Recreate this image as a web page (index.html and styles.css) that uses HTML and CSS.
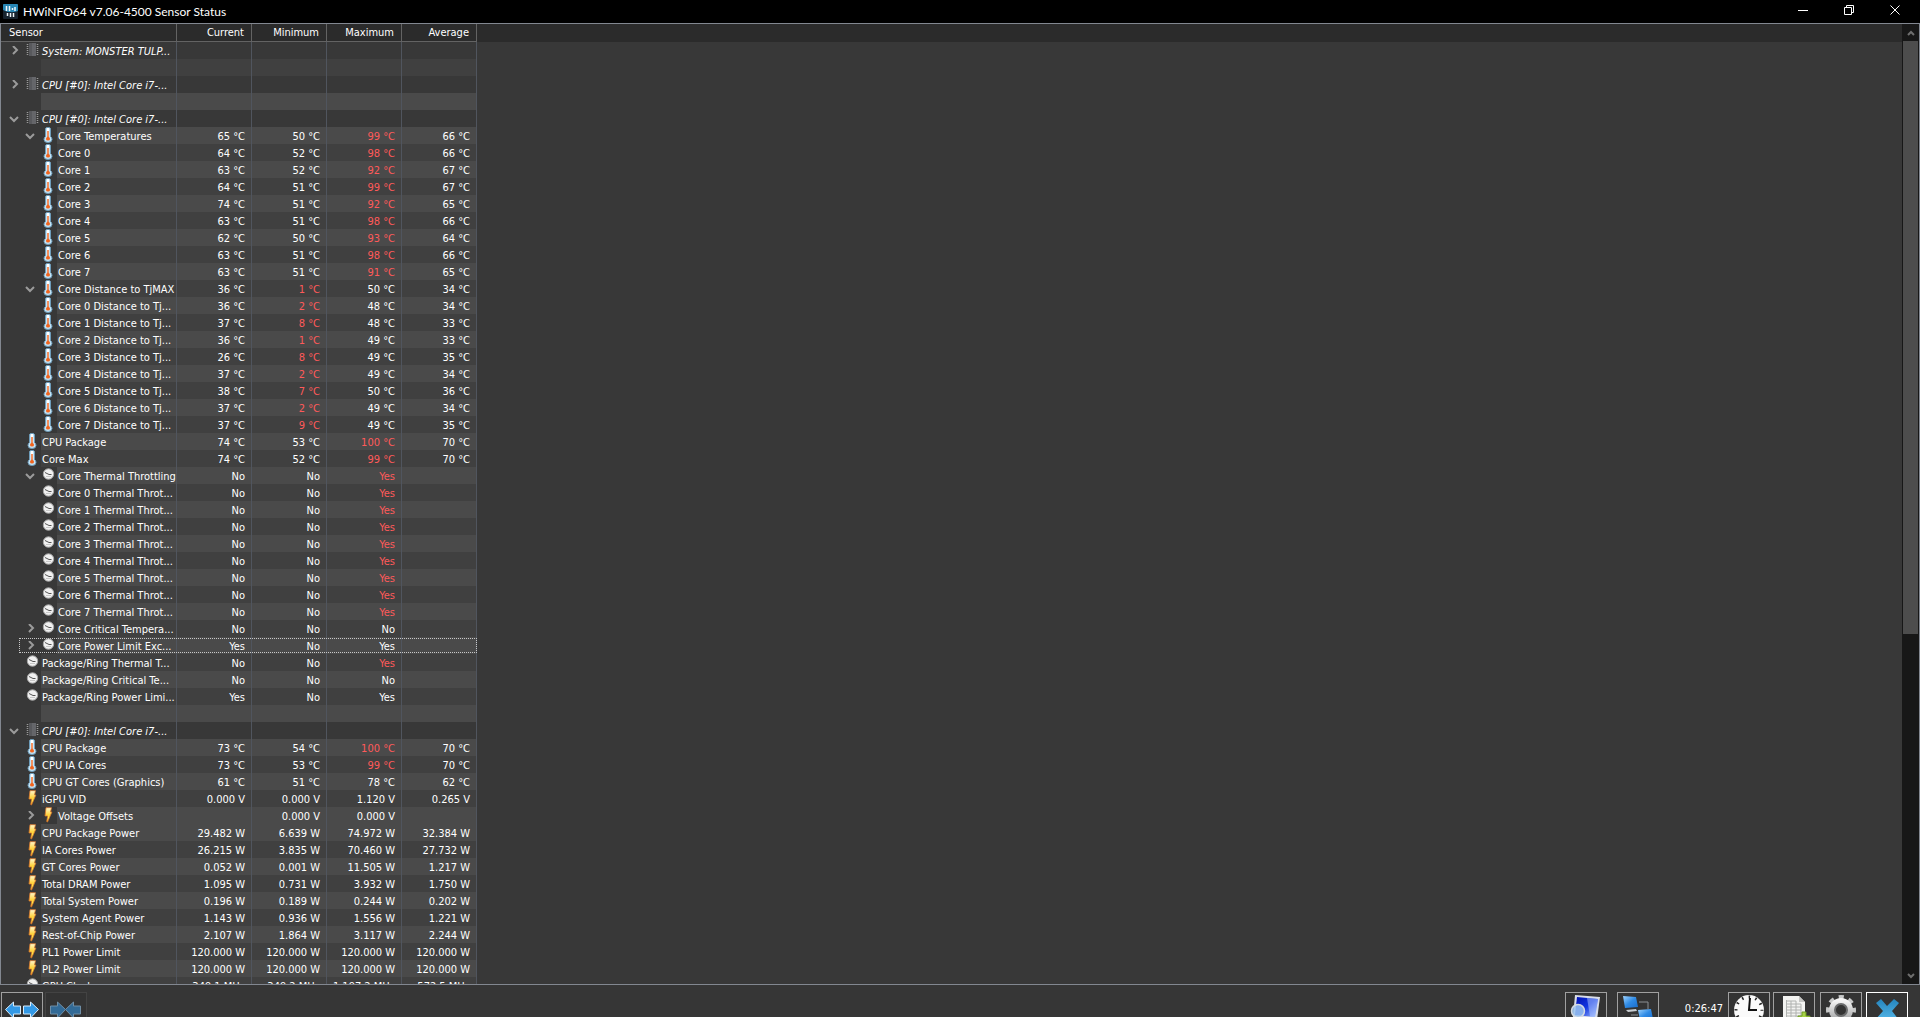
FILE: index.html
```html
<!DOCTYPE html>
<html lang="en">
<head>
<meta charset="utf-8">
<title>HWiNFO64 v7.06-4500 Sensor Status</title>
<link rel="stylesheet" href="styles.css">
</head>
<body>
<svg class="sprites" aria-hidden="true">
  <linearGradient id="silver" x1="0" y1="0" x2="0" y2="1"><stop offset="0" stop-color="#f4f4f4"/><stop offset="1" stop-color="#a9aaab"/></linearGradient>
  <linearGradient id="gold" x1="0" y1="0" x2="0" y2="1"><stop offset="0" stop-color="#fffad0"/><stop offset=".5" stop-color="#ffd23c"/><stop offset=".75" stop-color="#fff04a"/><stop offset="1" stop-color="#f08a20"/></linearGradient>
  <linearGradient id="screen" x1="0" y1="0" x2="1" y2="1"><stop offset="0" stop-color="#0010b0"/><stop offset=".5" stop-color="#1236e0"/><stop offset="1" stop-color="#a8c4ff"/></linearGradient>
  <linearGradient id="sky" x1="0" y1="0" x2="1" y2="1"><stop offset="0" stop-color="#9fd4ff"/><stop offset=".5" stop-color="#2f8be6"/><stop offset="1" stop-color="#1a6dcc"/></linearGradient>
  <linearGradient id="cross" x1="0" y1="0" x2="0" y2="1"><stop offset="0" stop-color="#2484bd"/><stop offset="1" stop-color="#5fc0f0"/></linearGradient>
  <symbol id="chip" viewBox="0 0 16 16"><path d="M5 1h7v13H5z" fill="#58595d"/><path d="M8 1h4v13H8z" fill="#65666a"/><path d="M3.500 2v12M13.500 2v12" stroke="#9a9a9a" stroke-width="1.500" stroke-dasharray="1 1"/></symbol>
  <symbol id="temp" viewBox="0 0 16 16"><path d="M5.500 1.500q0-1 2.500-1t2.500 1v8q1.500 1 1.500 3 0 3-4 3t-4-3q0-2 1.500-3z" fill="#c4e4f6" stroke="#6d9cba"/><path d="M7 1h2v8H7z" fill="#fff"/><path d="M7.300 4h1.400v6q1.300.5 1.300 2T8 13.500 6 12t1.300-2z" fill="#f0641e"/></symbol>
  <symbol id="dial" viewBox="0 0 16 16"><circle cx="8.500" cy="7" r="5.200" fill="#f1f1f1" stroke="#a8a8a8"/><path d="M5 5.500l4 2h2.500" fill="none" stroke="#555"/><path d="M6 9.500h5" stroke="#c8c8c8"/></symbol>
  <symbol id="bolt" viewBox="0 0 16 16"><path d="M6 .7h5.500L10.500 5h1.400L7.500 15l-.8-.5 1-5.500H5z" fill="url(#gold)" stroke="#d9772c" stroke-width=".8"/></symbol>
  <symbol id="closed" viewBox="0 0 10 10"><path d="M4 0l4 4-4 4" fill="none" stroke="#9b9b9b" stroke-width="2"/></symbol>
  <symbol id="open" viewBox="0 0 10 10"><path d="M1 3l4 4 4-4" fill="none" stroke="#9b9b9b" stroke-width="2"/></symbol>
</svg>

<header class="titlebar">
  <svg class="app-icon" viewBox="0 0 15 15"><rect width="15" height="15" rx="1" fill="#17232e"/><path d="M0 1q0-1 1-1h13q1 0 1 1v6q-8 3-15-1z" fill="#2786b4"/><path d="M3.500 2v5M6.500 2v5M9.500 4v2M12 3v4M4.500 9v3M7.500 9v4M10.500 9v4" stroke="#eef6fa" stroke-width="1.500"/></svg>
  <h1>HWiNFO64 v7.06-4500 Sensor Status</h1>
  <div class="window-controls">
    <button type="button" aria-label="Minimize"><svg viewBox="0 0 10 10"><path d="M0 5.500h10" stroke="#fff"/></svg></button>
    <button type="button" aria-label="Restore"><svg viewBox="0 0 10 10"><path d="M.5 2.500h7v7h-7zM2.500 2.500v-2h7v7h-2" fill="none" stroke="#fff"/></svg></button>
    <button type="button" aria-label="Close"><svg viewBox="0 0 10 10"><path d="M.5.500l9 9M9.500.500l-9 9" stroke="#fff"/></svg></button>
  </div>
</header>

<main class="list">
  <div class="view">
    <table class="sensors">
      <colgroup><col class="col-name"><col><col><col><col></colgroup>
      <thead><tr><th scope="col">Sensor</th><th scope="col">Current</th><th scope="col">Minimum</th><th scope="col">Maximum</th><th scope="col">Average</th></tr></thead>
      <tbody id="rows"></tbody>
    </table>
  </div>
  <div class="scrollbar">
    <button type="button" aria-label="Scroll up"><svg viewBox="0 0 8 8"><path d="M1 6l3-3 3 3" fill="none" stroke="#6e6e6e" stroke-width="2"/></svg></button>
    <div class="track"><div class="thumb"></div></div>
    <button type="button" aria-label="Scroll down"><svg viewBox="0 0 8 8"><path d="M1 2l3 3 3-3" fill="none" stroke="#6e6e6e" stroke-width="2"/></svg></button>
  </div>
</main>

<footer class="toolbar">
  <button type="button" class="tool" aria-label="Expand columns"><svg viewBox="0 0 40 40"><g fill="#3399e6" stroke="#d8ecfb"><path d="M3.500 16.500l8-7.500v4h7v8h-7v4z"/><path d="M36.500 16.500l-8-7.500v4h-7v8h7v4z"/></g></svg></button>
  <button type="button" class="tool" disabled aria-label="Shrink columns"><svg viewBox="0 0 40 40"><g fill="#326a96" stroke="#6f8ea6"><path d="M19.500 16.500l-8-7.500v4h-7v8h7v4z"/><path d="M19.500 16.500l8-7.500v4h7v8h-7v4z"/></g></svg></button>
  <div class="spacer"></div>
  <button type="button" class="tool inspect" aria-label="Summary"><svg viewBox="0 0 40 40"><path d="M9 2l25 2-3 23-24-3z" fill="#d9dde8"/><path d="M11 4l21 2-3 18-20-2z" fill="url(#screen)"/><path d="M21 5l11 1-3 18-5-.5z" fill="#b4ccff" fill-opacity=".5"/><circle cx="12" cy="18" r="6.500" fill="#9cc6f0" fill-opacity=".85" stroke="#d5dbe2" stroke-width="1.500"/></svg></button>
  <button type="button" class="tool network" aria-label="Remote"><svg viewBox="0 0 40 40"><path d="M21 9h9v7M13 22h7" fill="none" stroke="#8b8f93"/><path d="M5 3l13 1 2 10-13 1z" fill="url(#sky)"/><path d="M8 17l10-1 1 2-9 1z" fill="#c9ced2"/><path d="M20 17l13-1 2 10-13 1z" fill="url(#sky)"/></svg></button>
  <time class="elapsed">0:26:47</time>
  <button type="button" class="tool clock" aria-label="Reset timer"><svg viewBox="0 0 40 40"><circle cx="20" cy="17" r="15" fill="#fafafa"/><circle cx="20" cy="17" r="13" fill="none" stroke="#222" stroke-width="3" stroke-dasharray="1.500 5.307" stroke-dashoffset=".75"/><path d="M21 5l-1 12h8" fill="none" stroke="#111" stroke-width="2"/></svg></button>
  <button type="button" class="tool log" aria-label="Logging"><svg viewBox="0 0 40 40"><path d="M9 3h16l6 6v26H9z" fill="#f3f3f1"/><path d="M25 3v6h6z" fill="#c6c6c4"/><path d="M12.500 7v21M12 8h10M12 11h15M12 14h15M12 17h15M12 20h15M12 23h15M17 8v20M22 8v20M27 11v17" fill="none" stroke="#b0b2b0"/><path d="M28 19h4v4h4v4H24v-4h4z" fill="#a6d245" stroke="#6f9c24"/></svg></button>
  <button type="button" class="tool gear" aria-label="Settings"><svg viewBox="0 0 40 40"><circle cx="20" cy="17" r="13" fill="none" stroke="#c9caca" stroke-width="4" stroke-dasharray="5.100 5.110" stroke-dashoffset="2.700"/><circle cx="20" cy="17" r="9" fill="none" stroke="url(#silver)" stroke-width="6"/><circle cx="20" cy="17" r="6" fill="#333" stroke="#6b6c6d" stroke-width="2"/></svg></button>
  <button type="button" class="tool close" aria-label="Close"><svg viewBox="0 0 40 40"><path d="M9 10l5-4 6 7 7-7 5 4-7 8 7 9-5 5-7-8-7 8-5-5 8-9z" fill="url(#cross)"/></svg></button>
</footer>
<script src="script.js"></script>
</body>
</html>
```

FILE: styles.css
```css
* { box-sizing: border-box; }

html, body { height: 100%; }

body {
  margin: 0;
  display: flex;
  flex-direction: column;
  overflow: hidden;
  background: #363636;
  color: #fff;
  font: 11px/17px "DejaVu Sans Condensed", "Noto Sans", sans-serif;
}

button {
  margin: 0;
  padding: 0;
  border: 0;
  background: none;
  color: inherit;
  font: inherit;
}

svg { display: block; }

.sprites { position: absolute; width: 0; height: 0; }

.titlebar {
  flex: none;
  display: flex;
  align-items: center;
  height: 23px;
  padding: 0 2px 0 3px;
  background: #000;
}

.app-icon { width: 15px; height: 15px; }

h1 {
  flex: 1;
  margin: 0 0 0 5px;
  font: 12px/20px Lato, sans-serif;
}

.window-controls { display: flex; height: 100%; }
.window-controls button {
  width: 46px;
  height: 20px;
  display: grid;
  place-items: center;
}
.window-controls svg { width: 10px; height: 10px; }

.list {
  flex: 1;
  min-height: 0;
  display: flex;
  border: 1px solid #828790;
  background: #383838;
}

.view {
  flex: 1;
  min-width: 0;
  overflow: hidden;
  background: linear-gradient(#2b2b2b 18px, #383838 18px);
}

.sensors {
  width: 476px;
  table-layout: fixed;
  border-collapse: separate;
  border-spacing: 0;
}

.sensors col { width: 75px; }
.sensors .col-name { width: 176px; }

th, td {
  height: 17px;
  padding: 2px 6px 0 0;
  border-right: 1px solid #50555e;
  line-height: 15px;
  text-align: right;
  vertical-align: top;
  font-weight: 400;
  white-space: nowrap;
}

th {
  height: 18px;
  padding: 0 7px 0 0;
  border-color: #636363;
  border-bottom: 1px solid #636363;
  line-height: 17px;
}

th:first-child { padding-left: 8px; text-align: left; }
td.name { padding: 0; }

.cell { display: flex; height: 17px; }

.label {
  flex: 1;
  min-width: 0;
  padding: 2px 0 0 1px;
  text-align: left;
}

.twist { flex: none; width: 23px; height: 17px; padding: 4px 0 0 8px; }
.twist svg { width: 10px; height: 10px; }
.indent { flex: none; width: 16px; }
.icon { flex: none; width: 17px; height: 16px; }

.group .label { font-style: italic; }
.dark td:not(.name), .dark .label { background: #404040; }
.light td:not(.name), .light .label { background: #4a4a4a; }
.alert { color: #ff5a5a; }

.focused { position: relative; }
.focused::after {
  content: "";
  position: absolute;
  inset: 1px 0 1px 18px;
  border: 1px dotted #c8c8c8;
}

.scrollbar {
  flex: none;
  width: 17px;
  display: flex;
  flex-direction: column;
  background: #171717;
}
.scrollbar button { height: 17px; display: grid; place-items: center; }
.scrollbar svg { width: 8px; height: 8px; }
.track { flex: 1; padding: 0 1px; }
.thumb { height: 64%; background: #4d4d4d; }

.toolbar {
  flex: none;
  display: flex;
  height: 32px;
  padding: 7px 12px 0 1px;
  overflow: hidden;
}

.tool {
  flex: none;
  width: 42px;
  height: 42px;
  border: 1px solid #a0a0a0;
  background: #333;
}
.tool svg { width: 40px; height: 40px; }
.tool:disabled { margin-left: 2px; border-color: #434343; }
.spacer { flex: 1; }
.network { margin-left: 10px; }
.elapsed { width: 69px; padding: 8px 5px 0 0; text-align: right; }
.log { margin-left: 3px; }
.gear { margin-left: 5px; }
.close { margin-left: 4px; border-color: #fff; }
```

FILE: script.js
```js
// Each row: depth, icon, twist state, label, values, tone; "!" marks an alert value.
const C = "\u00a0°C";
const temps = (d, icon, twist, name, v) =>
  [d, icon, twist, name, v.split(" ").map(x => x + C)];

const rows = [
  [0, "chip", "closed", "System: MONSTER TULP...", []],
  [1, "", "", "", [], "dark"],
  [0, "chip", "closed", "CPU [#0]: Intel Core i7-...", []],
  [1, "", "", "", [], "light"],
  [0, "chip", "open", "CPU [#0]: Intel Core i7-...", []],
  temps(2, "temp", "open", "Core Temperatures", "65 50 !99 66"),
  ...["64 52 !98 66", "63 52 !92 67", "64 51 !99 67", "74 51 !92 65", "63 51 !98 66", "62 50 !93 64", "63 51 !98 66", "63 51 !91 65"]
    .map((v, i) => temps(2, "temp", "", `Core ${i}`, v)),
  temps(2, "temp", "open", "Core Distance to TjMAX", "36 !1 50 34"),
  ...["36 !2 48 34", "37 !8 48 33", "36 !1 49 33", "26 !8 49 35", "37 !2 49 34", "38 !7 50 36", "37 !2 49 34", "37 !9 49 35"]
    .map((v, i) => temps(2, "temp", "", `Core ${i} Distance to Tj...`, v)),
  temps(1, "temp", "", "CPU Package", "74 53 !100 70"),
  temps(1, "temp", "", "Core Max", "74 52 !99 70"),
  [2, "dial", "open", "Core Thermal Throttling", ["No", "No", "!Yes"]],
  ...[0, 1, 2, 3, 4, 5, 6, 7].map(i => [2, "dial", "", `Core ${i} Thermal Throt...`, ["No", "No", "!Yes"]]),
  [2, "dial", "closed", "Core Critical Tempera...", ["No", "No", "No"]],
  [2, "dial", "closed", "Core Power Limit Exc...", ["Yes", "No", "Yes"], "light focused"],
  [1, "dial", "", "Package/Ring Thermal T...", ["No", "No", "!Yes"]],
  [1, "dial", "", "Package/Ring Critical Te...", ["No", "No", "No"]],
  [1, "dial", "", "Package/Ring Power Limi...", ["Yes", "No", "Yes"]],
  [1, "", "", "", [], "light"],
  [0, "chip", "open", "CPU [#0]: Intel Core i7-...", []],
  temps(1, "temp", "", "CPU Package", "73 54 !100 70"),
  temps(1, "temp", "", "CPU IA Cores", "73 53 !99 70"),
  temps(1, "temp", "", "CPU GT Cores (Graphics)", "61 51 78 62"),
  [1, "bolt", "", "iGPU VID", ["0.000 V", "0.000 V", "1.120 V", "0.265 V"]],
  [2, "bolt", "closed", "Voltage Offsets", ["", "0.000 V", "0.000 V"], "light"],
  ...[
    ["CPU Package Power", "29.482 6.639 74.972 32.384"],
    ["IA Cores Power", "26.215 3.835 70.460 27.732"],
    ["GT Cores Power", "0.052 0.001 11.505 1.217"],
    ["Total DRAM Power", "1.095 0.731 3.932 1.750"],
    ["Total System Power", "0.196 0.189 0.244 0.202"],
    ["System Agent Power", "1.143 0.936 1.556 1.221"],
    ["Rest-of-Chip Power", "2.107 1.864 3.117 2.244"],
    ["PL1 Power Limit", "120.000 120.000 120.000 120.000"],
    ["PL2 Power Limit", "120.000 120.000 120.000 120.000"]
  ].map(([n, v], i) => [1, "bolt", "", n, v.split(" ").map(x => x + " W"), i % 2 ? "dark" : "light"]),
  [1, "dial", "", "GPU Clock", ["349.1 MHz", "349.2 MHz", "1,197.2 MHz", "572.5 MHz"], "dark"]
];

document.getElementById("rows").innerHTML = rows.map(([depth, icon, twist, name, values, tone], i) => {
  const cls = depth === 0 ? "group" : tone || (i % 2 ? "light" : "dark");
  const cells = [0, 1, 2, 3].map(k => {
    const v = values[k] || "";
    return v[0] === "!" ? `<td class="alert">${v.slice(1)}</td>` : `<td>${v}</td>`;
  }).join("");
  const arrow = twist ? `<svg><use href="#${twist}"/></svg>` : "";
  return `<tr class="${cls}"><td class="name"><div class="cell">` +
    (depth === 2 ? '<span class="indent"></span>' : "") +
    `<span class="twist">${arrow}</span><svg class="icon">${icon ? `<use href="#${icon}" width="16" height="16"/>` : ""}</svg>` +
    `<span class="label">${name}</span></div></td>${cells}</tr>`;
}).join("");
```
